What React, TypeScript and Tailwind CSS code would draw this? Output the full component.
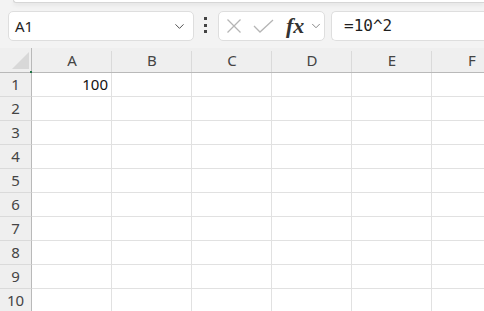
import { ChevronDown } from "lucide-react";

const cols = ["A", "B", "C", "D", "E", "F"];
const rows = [1, 2, 3, 4, 5, 6, 7, 8, 9, 10];

function NameBox() {
  return (
    <div className="flex h-[30px] w-[186px] items-center justify-between rounded-[5px] border border-[#dedede] bg-white pl-[6px] pr-[6px]">
      <span className="text-[15px] text-[#1f1f1f]">A1</span>
      <ChevronDown size={15} strokeWidth={1.5} className="text-[#444]" />
    </div>
  );
}

function FormulaButtons() {
  return (
    <div className="flex h-[30px] w-[107px] items-center rounded-[5px] border border-[#dedede] bg-white pl-[7px]">
      <svg width="16" height="16" viewBox="0 0 16 16" className="text-[#b5b5b5]">
        <path d="M1.5 1.5 L14.5 14.5 M14.5 1.5 L1.5 14.5" stroke="currentColor" strokeWidth="1.3" fill="none" />
      </svg>
      <svg width="22" height="16" viewBox="0 0 22 16" className="ml-[11px] text-[#b5b5b5]">
        <path d="M1 8 L7 14 L20 2" stroke="currentColor" strokeWidth="1.3" fill="none" />
      </svg>
      <span className="ml-[11px] font-['Liberation_Serif',serif] text-[22px] font-semibold italic leading-none text-[#333]">fx</span>
      <ChevronDown size={14} strokeWidth={1.5} className="ml-[5px] text-[#777]" />
    </div>
  );
}

export default function App() {
  return (
    <div className="h-[311px] w-[484px] overflow-hidden bg-[#f3f3f3] font-['Noto_Sans',sans-serif]">
      <div className="ml-[13px] h-[3px] rounded-bl-[4px] border-b border-l border-[#d6d6d6] bg-white shadow-[0_2px_4px_rgba(0,0,0,0.08)]" />
      <div className="flex h-[45px] items-start pl-[8px] pt-[8px]">
        <NameBox />
        <div className="ml-[10px] mt-[6px] flex h-[16px] flex-col justify-between">
          <span className="h-[3px] w-[3px] bg-[#444]" />
          <span className="h-[3px] w-[3px] bg-[#444]" />
          <span className="h-[3px] w-[3px] bg-[#444]" />
        </div>
        <div className="ml-[11px]">
          <FormulaButtons />
        </div>
        <div className="ml-[6px] flex h-[30px] flex-1 items-center rounded-l-[5px] border border-r-0 border-[#dedede] bg-white pl-[12px]">
          <span className="font-['DejaVu_Sans_Mono',monospace] text-[16px] text-[#1f1f1f]">=10^2</span>
        </div>
      </div>

      <div className="grid grid-cols-[32px_80px_80px_80px_80px_80px_80px]">
        <div className="relative h-[25px] border-r border-b border-[#b9b9b9] bg-[#efefef]">
          <svg width="18" height="18" viewBox="0 0 18 18" className="absolute left-[12px] top-[4px]">
            <polygon points="17,0 17,17 0,17" fill="#d8d8d8" />
          </svg>
          <span className="absolute right-[-1px] bottom-[-1px] h-[2px] w-[2px] bg-[#217346]" />
        </div>
        {cols.map((c) => (
          <div key={c} className="relative flex h-[25px] items-center justify-center border-b border-[#b9b9b9] bg-[#efefef] text-[15px] text-[#444]">
            <span className="absolute right-0 bottom-0 top-[3px] w-px bg-[#dadada]" />
            {c}
          </div>
        ))}
        {rows.map((r) => (
          <div key={r} className="contents">
            <div className="flex h-[24px] items-center justify-center border-r border-b border-r-[#b9b9b9] border-b-[#dadada] bg-[#efefef] text-[15px] text-[#444]">
              {r}
            </div>
            {cols.map((c) => (
              <div key={c} className="flex h-[24px] items-center justify-end border-r border-b border-[#e1e1e1] bg-white pr-[3px] text-[15px] text-[#111]">
                {r === 1 && c === "A" ? "100" : ""}
              </div>
            ))}
          </div>
        ))}
      </div>
    </div>
  );
}
